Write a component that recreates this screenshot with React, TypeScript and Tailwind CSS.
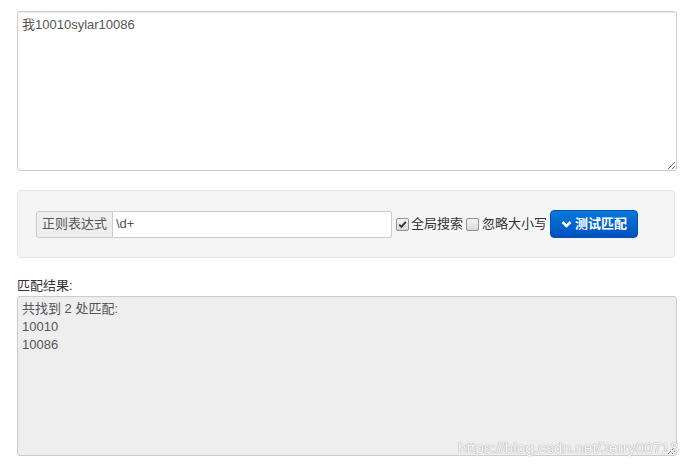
import React from "react";

const font = { fontFamily: '"Liberation Sans", Arial, "Noto Sans CJK SC", sans-serif' };

function Check({ checked }: { checked?: boolean }) {
  return (
    <span className="inline-flex h-[13px] w-[13px] items-center justify-center rounded-[2px] border border-[#8f8f8f] bg-gradient-to-b from-[#f4f4f4] to-[#d9d9d9]">
      {checked && (
        <svg width="9" height="9" viewBox="0 0 9 9">
          <path d="M1.2 4.6 L3.5 6.9 L7.8 1.8" fill="none" stroke="#333" strokeWidth="1.8" />
        </svg>
      )}
    </span>
  );
}

export default function App() {
  return (
    <div className="relative h-[466px] w-[692px] bg-white text-[13px] text-[#333]" style={font}>
      <div className="flex w-[660px] flex-col pl-0 pt-[11px] ml-[17px]">
        <textarea
          readOnly
          defaultValue="我10010sylar10086"
          className="h-[160px] w-[660px] resize-y rounded-[3px] border border-[#ccc] bg-white px-[4px] py-[4px] text-[13px] leading-[18px] text-[#555] shadow-[inset_0_1px_1px_rgba(0,0,0,0.075)] outline-none"
          style={font}
        />
        <div className="mt-[19px] flex h-[68px] w-[658px] items-center rounded-[4px] border border-[#e3e3e3] bg-[#f5f5f5] pl-[18px]">
          <div className="flex h-[27px] items-stretch">
            <span className="flex w-[77px] items-center justify-center rounded-l-[3px] border border-[#ccc] bg-[#eee] text-[13px] text-[#555]">
              正则表达式
            </span>
            <span className="flex w-[279px] items-center rounded-r-[3px] border border-l-0 border-[#ccc] bg-white px-[3px] text-[13px] text-[#555]">
              \d+
            </span>
          </div>
          <span className="ml-[4px] flex items-center">
            <Check checked />
          </span>
          <span className="ml-[2px]">全局搜索</span>
          <span className="ml-[3px] flex items-center">
            <Check />
          </span>
          <span className="ml-[3px]">忽略大小写</span>
          <button
            className="ml-[3px] flex h-[28px] w-[88px] items-center justify-center gap-[3px] rounded-[4px] border border-[#0055b8] bg-gradient-to-b from-[#0a7ad9] to-[#0050c0] text-[13px] font-bold text-white"
            style={font}
          >
            <svg width="11" height="9" viewBox="0 0 11 9">
              <path d="M1.5 2 L5.5 6 L9.5 2" fill="none" stroke="#fff" strokeWidth="2.6" />
            </svg>
            测试匹配
          </button>
        </div>
        <div className="mt-[18px] h-[20px] leading-[20px]">匹配结果:</div>
        <textarea
          readOnly
          defaultValue={"共找到 2 处匹配:\n10010\n10086"}
          className="mt-0 h-[160px] w-[660px] resize-y rounded-[3px] border border-[#ccc] bg-[#eee] px-[4px] py-[3px] text-[13px] leading-[18px] text-[#555] outline-none"
          style={font}
        />
      </div>
      <div
        className="absolute left-[458px] top-[436px] text-[15.5px] text-[#fafafa]"
        style={{ ...font, textShadow: "0 0 1px #999, 0 0 1px #aaa" }}
      >
        https://blog.csdn.net/Jerry00713
      </div>
    </div>
  );
}
